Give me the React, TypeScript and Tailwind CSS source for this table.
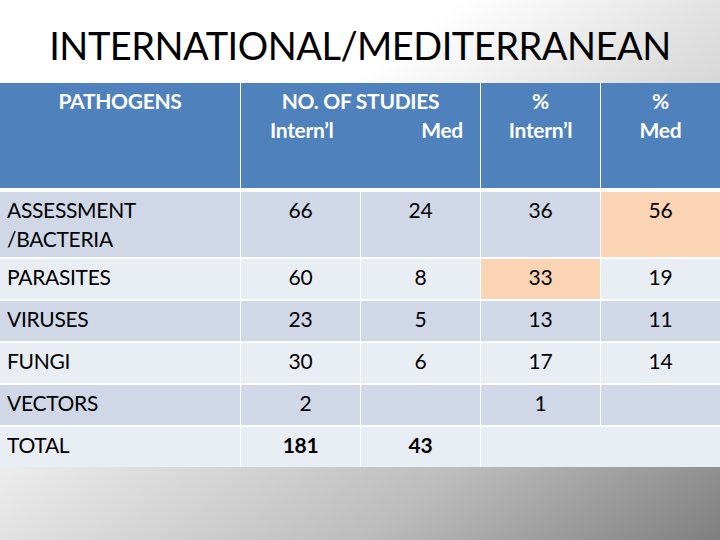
const font = { fontFamily: '"Lato", "Open Sans", sans-serif' };

type Cell = { text?: string; span?: number; hl?: boolean; bold?: boolean; shift?: boolean };
type Row = { name: string[]; tall?: boolean; bg: string; cells: Cell[] };

const rows: Row[] = [
  {
    name: ["ASSESSMENT", "/BACTERIA"],
    tall: true,
    bg: "bg-[#d0d8e8]",
    cells: [{ text: "66" }, { text: "24" }, { text: "36" }, { text: "56", hl: true }],
  },
  {
    name: ["PARASITES"],
    bg: "bg-[#e9edf4]",
    cells: [{ text: "60" }, { text: "8" }, { text: "33", hl: true }, { text: "19" }],
  },
  {
    name: ["VIRUSES"],
    bg: "bg-[#d0d8e8]",
    cells: [{ text: "23" }, { text: "5" }, { text: "13" }, { text: "11" }],
  },
  {
    name: ["FUNGI"],
    bg: "bg-[#e9edf4]",
    cells: [{ text: "30" }, { text: "6" }, { text: "17" }, { text: "14" }],
  },
  {
    name: ["VECTORS"],
    bg: "bg-[#d0d8e8]",
    cells: [{ text: "2", shift: true }, {}, { text: "1" }, {}],
  },
  {
    name: ["TOTAL"],
    bg: "bg-[#e9edf4]",
    cells: [{ text: "181", bold: true }, { text: "43", bold: true }, { span: 2 }],
  },
];

export default function App() {
  return (
    <div
      className="w-[720px] h-[540px] overflow-hidden flex flex-col bg-[linear-gradient(to_bottom_right,#ffffff_0%,#ffffff_32%,#e2e2e2_50%,#bdbdbd_75%,#7f7f7f_100%)]"
      style={font}
    >
      {/* title */}
      <div className="h-[83px] flex items-center justify-center pt-[7px]">
        <h1 className="text-[38px] leading-none text-black tracking-[-0.5px]">INTERNATIONAL/MEDITERRANEAN</h1>
      </div>

      {/* table */}
      <div className="grid grid-cols-[240px_119px_119px_119px_1fr] gap-x-[1px] gap-y-[2px] bg-white text-[21px] leading-[29px] tracking-[-0.3px]">
        {/* header */}
        <div className="bg-[#4f81bd] h-[105px] mb-[2px] pt-[3px] text-center font-bold text-white">PATHOGENS</div>
        <div className="col-span-2 bg-[#4f81bd] h-[105px] mb-[2px] pt-[3px] font-bold text-white">
          <div className="text-center">NO. OF STUDIES</div>
          <div className="flex justify-between pl-[29px] pr-[17px]">
            <span>Intern’l</span>
            <span>Med</span>
          </div>
        </div>
        <div className="bg-[#4f81bd] h-[105px] mb-[2px] pt-[3px] text-center font-bold text-white">
          <div>%</div>
          <div>Intern’l</div>
        </div>
        <div className="bg-[#4f81bd] h-[105px] mb-[2px] pt-[3px] text-center font-bold text-white">
          <div>%</div>
          <div>Med</div>
        </div>

        {/* body */}
        {rows.map((r) => (
          <div key={r.name[0]} className="contents">
            <div className={`${r.bg} ${r.tall ? "h-[65px]" : "h-[40px]"} pt-[3px] pl-[7px] text-black`}>
              {r.name.map((n) => (
                <div key={n}>{n}</div>
              ))}
            </div>
            {r.cells.map((c, i) => (
              <div
                key={i}
                className={`${c.hl ? "bg-[#fbd4b4]" : r.bg} ${c.span === 2 ? "col-span-2" : ""} ${
                  r.tall ? "h-[65px]" : "h-[40px]"
                } pt-[3px] text-center text-black ${c.bold ? "font-bold" : ""} ${c.shift ? "pl-[10px]" : ""}`}
              >
                {c.text}
              </div>
            ))}
          </div>
        ))}
      </div>
    </div>
  );
}
